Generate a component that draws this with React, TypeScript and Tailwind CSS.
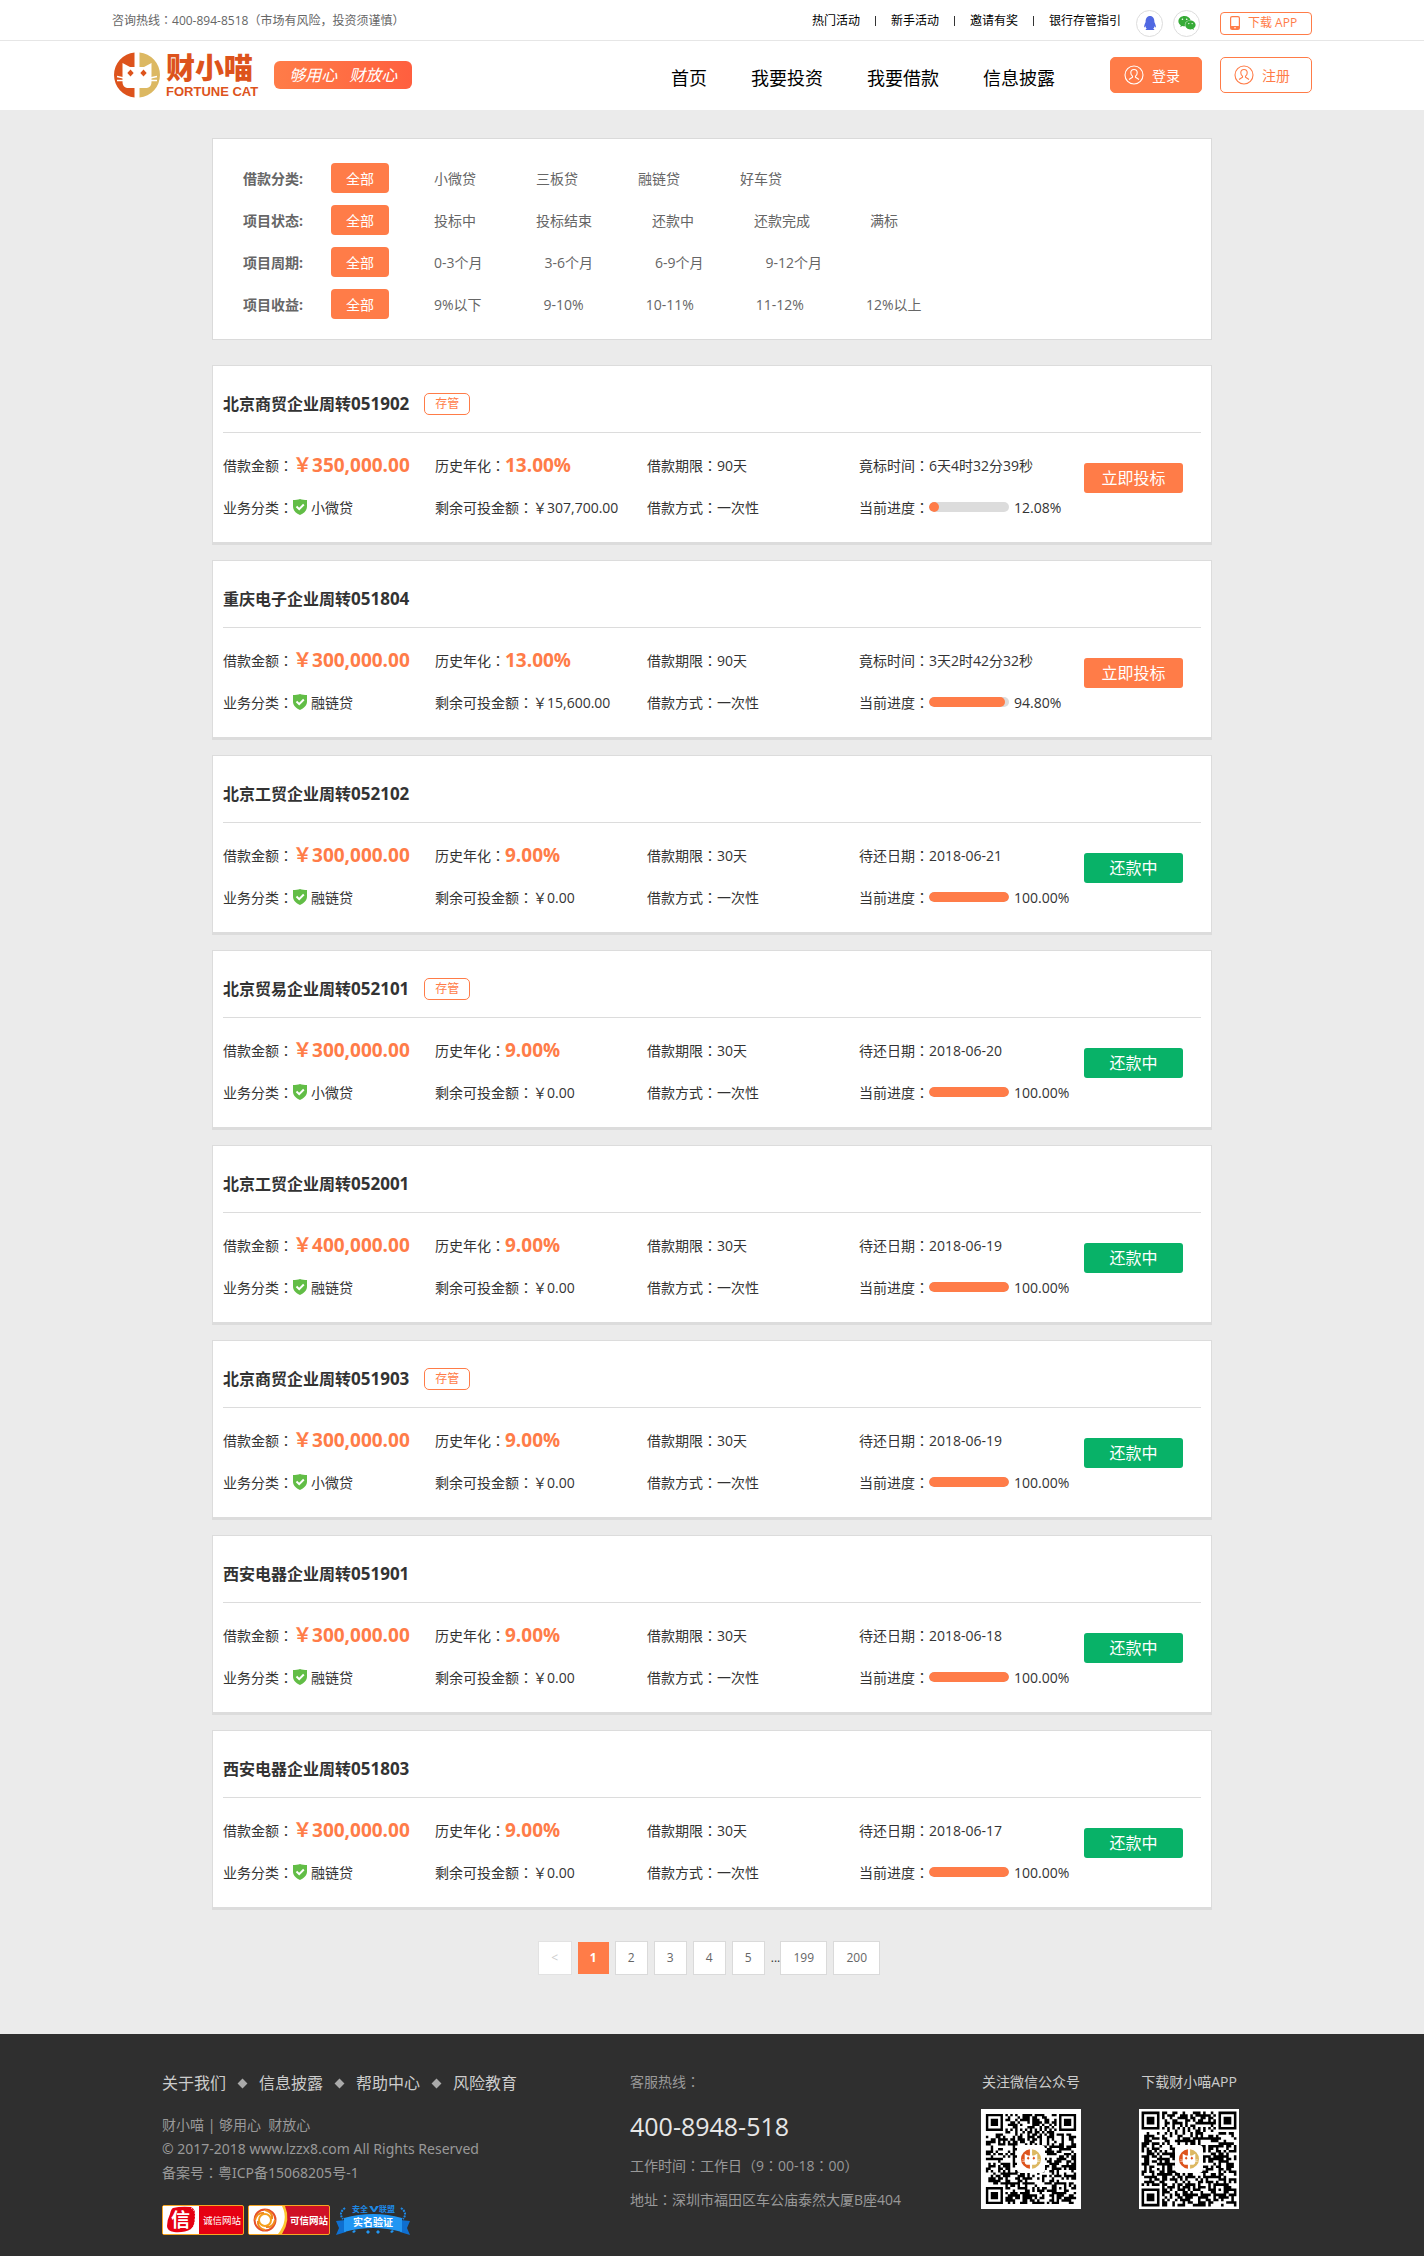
import React from "react";
import { FaQq, FaWeixin } from "react-icons/fa";

/* Full-width colon whose dots sit in the middle of its cell. */
const Colon = () => (
  <span className="font-['Open_Sans','Noto_Sans_CJK_TC',sans-serif]">：</span>
);

function CatMark({ className }: { className?: string }) {
  return (
    <svg viewBox="0 0 46 46" className={className} aria-hidden="true">
      <path d="M20.5 .5 A22.6 22.6 0 0 0 20.5 45.5 V36 H13 Q8.500 35 8.500 30 V11 L16 15 H20.500 Z" fill="#dd531c" />
      <path d="M25.500 .5 A22.6 22.6 0 0 1 25.500 45.500 V36 H33 Q37.500 35 37.500 30 V11 L30 15 H25.500 Z" fill="#dcb862" />
      <path d="M16.500 17.500l3.200 3.500-3.200 3.500-3.200-3.500zM29.500 17.500l3.200 3.500-3.200 3.500-3.200-3.500z" fill="#dd531c" />
      <path d="M3 24.500l7 1.500M3 28.500h7M43 24.500l-7 1.500M43 28.500h-7" stroke="#fff" strokeWidth="1.300" />
    </svg>
  );
}

function UserIcon() {
  return (
    <svg viewBox="0 0 20 20" className="size-5" fill="none" stroke="currentColor" strokeWidth="1.1" aria-hidden="true">
      <circle cx="10" cy="10" r="9" />
      <path d="M10 4.500c-2 0-3.200 1.400-3.200 3.300 0 1.600.7 2.700 1.700 3.300v1L5 14.500M10 4.500c2 0 3.200 1.400 3.200 3.300 0 1.600-.7 2.700-1.700 3.300v1l3.500 2.400" />
    </svg>
  );
}

function PhoneIcon() {
  return (
    <svg viewBox="0 0 10 14" className="h-3.5 w-2.5" aria-hidden="true">
      <rect x=".6" y=".6" width="8.800" height="12.800" rx="1.500" fill="none" stroke="currentColor" strokeWidth="1.200" />
      <path d="M1 10h8v3H1z" fill="currentColor" />
      <circle cx="5" cy="11.700" r=".8" fill="#fff" />
    </svg>
  );
}

function Shield() {
  return (
    <svg viewBox="0 0 14 16" className="h-4 w-3.5" aria-hidden="true">
      <path d="M7 0c2 .8 4.500 1 7 1v6.500c0 4-3 6.800-7 8.500-4-1.700-7-4.500-7-8.500V1c2.500 0 5-.2 7-1z" fill="#62bd46" />
      <path d="M3.500 7.500l2.700 2.600 4.600-4.600" fill="none" stroke="#fff" strokeWidth="2" />
    </svg>
  );
}

const topLinks = ["热门活动", "新手活动", "邀请有奖", "银行存管指引"];
const navLinks = ["首页", "我要投资", "我要借款", "信息披露"];

function Header() {
  return (
    <header className="bg-white">
      <div className="h-[41px] border-b border-[#e6e6e6]">
        <div className="mx-auto flex h-full max-w-[1200px] items-center justify-between pt-0.5 text-[12px]">
          <p className="text-[#666]">
            咨询热线<Colon />400-894-8518
            <span className="font-['Open_Sans','Noto_Sans_CJK_TC',sans-serif]">（</span>市场有风险，投资须谨慎
            <span className="font-['Open_Sans','Noto_Sans_CJK_TC',sans-serif]">）</span>
          </p>
          <div className="flex items-center">
            <ul className="flex items-center text-black">
              {topLinks.map((t, i) => (
                <li key={t} className="flex items-center">
                  {i > 0 && <span className="mx-[15px] h-2.5 w-px bg-[#333]" />}
                  <a href="#">{t}</a>
                </li>
              ))}
            </ul>
            <div className="ml-[15px] flex gap-2.5 pt-1">
              <a href="#" aria-label="QQ" className="flex size-[27px] items-center justify-center rounded-full border border-[#ddd] text-[#5068e2]">
                <FaQq className="size-3.5" />
              </a>
              <a href="#" aria-label="微信" className="flex size-[27px] items-center justify-center rounded-full border border-[#ddd] text-[#36ab36]">
                <FaWeixin className="size-[18px]" />
              </a>
            </div>
            <div className="pt-1 pl-5">
              <a href="#" className="flex h-[23px] w-[92px] items-center gap-2 rounded border border-[#ff7c48] pl-[9px] text-[#ff7c48]">
                <PhoneIcon />
                下载 APP
              </a>
            </div>
          </div>
        </div>
      </div>
      <div className="mx-auto flex h-[69px] max-w-[1200px] items-center justify-between pb-px">
        <div className="flex items-center">
          <a href="#" className="flex items-center gap-1.5 pl-0.5 text-[#dd531c]">
            <CatMark className="size-[46px]" />
            <span className="flex flex-col">
              <span className="text-[29px] leading-[33px] font-black">财小喵</span>
              <span className="font-['Liberation_Sans',sans-serif] text-[13px] leading-[15px] font-bold">FORTUNE CAT</span>
            </span>
          </a>
          <span className="ml-4 flex h-7 w-[138px] items-center justify-center gap-3 rounded-md bg-linear-to-r from-[#ff7c48] to-[#ff5f3f] text-[16px] text-white italic">
            <span>够用心</span>
            <span>财放心</span>
          </span>
        </div>
        <div className="flex items-center">
          <nav className="flex gap-11 pt-1.5 text-[18px] text-black">
            {navLinks.map((t) => (
              <a key={t} href="#">{t}</a>
            ))}
          </nav>
          <div className="ml-[55px] flex gap-[18px] text-[14px]">
            <button className="flex h-9 w-[92px] items-center gap-2 rounded-[5px] border border-[#ff7c48] bg-[#ff7c48] pl-[13px] text-white">
              <UserIcon />
              登录
            </button>
            <button className="flex h-9 w-[92px] items-center gap-2 rounded-[5px] border border-[#ff7c48] pl-[13px] text-[#ff7c48]">
              <UserIcon />
              注册
            </button>
          </div>
        </div>
      </div>
    </header>
  );
}

const filters = [
  { label: "借款分类:", gap: "gap-[60px]", options: ["小微贷", "三板贷", "融链贷", "好车贷"] },
  { label: "项目状态:", gap: "gap-[60px]", options: ["投标中", "投标结束", "还款中", "还款完成", "满标"] },
  { label: "项目周期:", gap: "gap-[62px]", options: ["0-3个月", "3-6个月", "6-9个月", "9-12个月"] },
  { label: "项目收益:", gap: "gap-[62px]", options: ["9%以下", "9-10%", "10-11%", "11-12%", "12%以上"] },
];

function Filters() {
  return (
    <section className="flex flex-col gap-3 border border-[#dadada] bg-white px-[30px] pt-6 pb-5 text-[14px] text-[#666]">
      {filters.map((f) => (
        <div key={f.label} className="flex h-[30px] items-center">
          <span className="w-[88px] font-bold">{f.label}</span>
          <button className="h-[30px] w-[58px] rounded bg-[#ff7c48] text-white">全部</button>
          <div className={`ml-[45px] flex ${f.gap}`}>
            {f.options.map((o) => (
              <button key={o}>{o}</button>
            ))}
          </div>
        </div>
      ))}
    </section>
  );
}

type Loan = {
  name: string;
  no: string;
  custody?: boolean;
  amount: string;
  rate: string;
  kind: string;
  left: string;
  term: string;
  dateLabel: string;
  date: string;
  progress: number;
};

const paid = { rate: "9.00%", left: "0.00", term: "30天", dateLabel: "待还日期", progress: 100 };

const loans: Loan[] = [
  { name: "北京商贸企业周转", no: "051902", custody: true, amount: "350,000.00", rate: "13.00%", kind: "小微贷", left: "307,700.00", term: "90天", dateLabel: "竟标时间", date: "6天4时32分39秒", progress: 12.08 },
  { name: "重庆电子企业周转", no: "051804", amount: "300,000.00", rate: "13.00%", kind: "融链贷", left: "15,600.00", term: "90天", dateLabel: "竟标时间", date: "3天2时42分32秒", progress: 94.8 },
  { ...paid, name: "北京工贸企业周转", no: "052102", amount: "300,000.00", kind: "融链贷", date: "2018-06-21" },
  { ...paid, name: "北京贸易企业周转", no: "052101", custody: true, amount: "300,000.00", kind: "小微贷", date: "2018-06-20" },
  { ...paid, name: "北京工贸企业周转", no: "052001", amount: "400,000.00", kind: "融链贷", date: "2018-06-19" },
  { ...paid, name: "北京商贸企业周转", no: "051903", custody: true, amount: "300,000.00", kind: "小微贷", date: "2018-06-19" },
  { ...paid, name: "西安电器企业周转", no: "051901", amount: "300,000.00", kind: "融链贷", date: "2018-06-18" },
  { ...paid, name: "西安电器企业周转", no: "051803", amount: "300,000.00", kind: "融链贷", date: "2018-06-17" },
];

function Field({ label, children }: { label: string; children: React.ReactNode }) {
  return (
    <div className="flex items-center whitespace-nowrap">
      <span>{label}<Colon /></span>
      {children}
    </div>
  );
}

function LoanCard({ loan }: { loan: Loan }) {
  const open = loan.progress < 100;
  return (
    <li className="border border-b-3 border-[#dcdcdc] bg-white px-2.5 pb-3.5 text-[14px] text-[#333]">
      <div className="flex h-[67px] items-center gap-[15px] border-b border-[#dcdcdc] pt-2.5">
        <h2 className="text-[16px] leading-6 font-bold">
          {loan.name}<span className="text-[17px]">{loan.no}</span>
        </h2>
        {loan.custody && (
          <span className="flex h-[22px] w-[46px] items-center justify-center rounded-[5px] border border-[#ff7c48] text-[12px] text-[#ff7c48]">存管</span>
        )}
      </div>
      <div className="grid auto-rows-[42px] grid-cols-[repeat(4,212fr)_130fr] pt-[11px]">
        <Field label="借款金额">
          <strong className="text-[19px] leading-6 text-[#ff7c48]">￥{loan.amount}</strong>
        </Field>
        <Field label="历史年化">
          <strong className="text-[19px] leading-6 text-[#ff7c48]">{loan.rate}</strong>
        </Field>
        <Field label="借款期限">{loan.term}</Field>
        <Field label={loan.dateLabel}>{loan.date}</Field>
        <div className="row-span-2 flex items-center pb-4 pl-[13px]">
          <button className={`h-[30px] w-[99px] rounded-[3px] text-[16px] text-white ${open ? "bg-[#ff7c48]" : "bg-[#08b268]"}`}>
            {open ? "立即投标" : "还款中"}
          </button>
        </div>
        <Field label="业务分类">
          <Shield />
          <span className="ml-1">{loan.kind}</span>
        </Field>
        <Field label="剩余可投金额">￥{loan.left}</Field>
        <Field label="借款方式">一次性</Field>
        <Field label="当前进度">
          <div
            role="progressbar"
            aria-label="当前进度"
            aria-valuenow={loan.progress}
            className="h-2.5 w-20 overflow-hidden rounded-full bg-[#dcdcdc]"
          >
            <div className="h-full rounded-full bg-[#ff7c48]" style={{ width: `${loan.progress}%` }} />
          </div>
          <span className="ml-[5px]">{loan.progress.toFixed(2)}%</span>
        </Field>
      </div>
    </li>
  );
}

function Pagination() {
  const page = "h-[34px] border border-[#dadada] bg-white text-[#666]";
  return (
    <nav aria-label="分页" className="mt-[31px] flex items-center justify-center gap-1.5 pr-1.5 text-[12px]">
      <button disabled className="h-[34px] w-[34px] border border-[#e2e2e2] bg-white text-[#ccc]">&lt;</button>
      <button aria-current="page" className="h-8 w-[31px] bg-[#ff7c48] font-bold text-white">1</button>
      {["2", "3", "4", "5"].map((n) => (
        <button key={n} className={`${page} w-[33px]`}>{n}</button>
      ))}
      <div className="flex items-center text-[#333]">
        ...
        <button className={`${page} w-[47px]`}>199</button>
      </div>
      <button className={`${page} w-[47px]`}>200</button>
    </nav>
  );
}

const N = 37;

function finder(x: number, y: number): boolean | null {
  for (const [fx, fy] of [[0, 0], [N - 7, 0], [0, N - 7]]) {
    const dx = x - fx;
    const dy = y - fy;
    if (dx >= -1 && dx <= 7 && dy >= -1 && dy <= 7) {
      const d = Math.max(Math.abs(dx - 3), Math.abs(dy - 3));
      return d === 3 || d <= 1;
    }
  }
  const a = Math.max(Math.abs(x - 30), Math.abs(y - 30));
  return a <= 2 ? a !== 1 : null;
}

function qrPath(seed: number): string {
  let s = seed;
  let d = "";
  for (let y = 0; y < N; y++) {
    for (let x = 0; x < N; x++) {
      s = (s * 1103515245 + 12345) % 2147483648;
      const fixed = finder(x, y);
      const on = fixed === null ? (x === 6 || y === 6 ? (x + y) % 2 === 0 : s / 2147483648 < 0.52) : fixed;
      if (on) d += `M${x} ${y}h1v1h-1z`;
    }
  }
  return d;
}

function QrCode({ label, seed, wide }: { label: string; seed: number; wide?: boolean }) {
  return (
    <figure className="flex w-[100px] flex-col items-center gap-[15px]">
      <figcaption className="text-[14px] leading-6 whitespace-nowrap text-[#ccc]">{label}</figcaption>
      <div className="relative size-[100px] bg-white">
        <svg viewBox={wide ? "-1 -1 39 39" : "-2 -2 41 41"} className="size-full" role="img" aria-label={label}>
          <path d={qrPath(seed)} fill="#000" />
        </svg>
        <span className="absolute inset-0 m-auto flex size-7 items-center justify-center rounded bg-white">
          <CatMark className="size-5" />
        </span>
      </div>
    </figure>
  );
}

function HonestBadge() {
  return (
    <svg viewBox="0 0 82 30" className="h-[30px] w-[82px]" role="img" aria-label="诚信网站">
      <rect x=".5" y=".5" width="81" height="29" rx="1.500" fill="#e60012" stroke="#f5a623" />
      <path d="M1 1h36v28H1z" fill="#fff" />
      <path d="M11 3q8-2 18-1 5 2 4 10 0 9-4 12-7 4-17 3-7-1-7-6 0-6 3-12 1-5 3-6z" fill="#e60012" />
      <path d="M29 3q5 3 4 10 0 8-4 11" fill="none" stroke="#fff" strokeWidth=".8" strokeDasharray="1.500 1.500" />
      <text x="9" y="22" fontSize="19" fontWeight="700" fill="#fff">信</text>
      <text x="41" y="19" fontSize="9.500" fill="#fff">诚信网站</text>
    </svg>
  );
}

function TrustBadge() {
  return (
    <svg viewBox="0 0 82 30" className="h-[30px] w-[82px]" role="img" aria-label="可信网站">
      <rect x=".5" y=".5" width="81" height="29" rx="1.500" fill="#cf1126" stroke="#f5a623" />
      <path d="M1 1h34q7 14-3 28H1z" fill="#fff" />
      <path d="M34 1q7 14-4 28h4q9-14 3-28z" fill="#fdc62f" />
      <g fill="none" strokeWidth="2">
        <circle cx="17" cy="15" r="10.500" stroke="#e6502a" />
        <circle cx="17" cy="15" r="6" stroke="#f5a11c" />
        <path d="M17 5q8 2 7 9M27 15q-2 8-9 7M17 25q-8-2-7-9M7 15q2-8 9-7" stroke="#f08a1d" />
      </g>
      <text x="42" y="19" fontSize="9.500" fontWeight="700" fill="#fff">可信网站</text>
    </svg>
  );
}

function VerifiedBadge() {
  return (
    <svg viewBox="0 0 74 30" className="h-[30px] w-[74px]" role="img" aria-label="安全联盟实名验证">
      <path d="M9 3q-7 5-2 11M65 3q7 5 2 11" fill="none" stroke="#1e88e5" strokeWidth="2" strokeDasharray="2 1" />
      <path d="M0 16l10-1v12l-10 3 3-7zM74 16l-10-1v12l10 3-3-7z" fill="#0f6fd0" />
      <path d="M8 13q29-8 58 0v14q-29-8-58 0z" fill="#2196f3" />
      <text x="16" y="7" fontSize="8" fontWeight="700" fill="#1e88e5">安全</text>
      <path d="M33 1h3l2 4 2-4h3l-4 6h-2z" fill="#1e88e5" />
      <text x="43" y="7" fontSize="8" fontWeight="700" fill="#1e88e5">联盟</text>
      <text x="17" y="21" fontSize="10" fontWeight="700" fill="#fff">实名验证</text>
      <path d="M18 25l2 1-2 2-2-1zM32 25l2 2-2 2-2-2zM42 25l2 2-2 2-2-2zM56 25l2 1-2 2-2-1z" fill="#2196f3" />
    </svg>
  );
}

const footerLinks = ["关于我们", "信息披露", "帮助中心", "风险教育"];

function Footer() {
  return (
    <footer className="bg-[#2f2f2f] pt-9 pb-[21px] text-[14px] text-[#999]">
      <div className="mx-auto flex max-w-[1100px] items-start justify-between pr-[23px]">
        <div className="w-[468px]">
          <ul className="flex items-center text-[16px] leading-[26px] text-[#ccc]">
            {footerLinks.map((t, i) => (
              <li key={t} className="flex items-center">
                {i > 0 && <span className="mx-[13px] size-[7px] rotate-45 bg-[#aaa]" />}
                <a href="#">{t}</a>
              </li>
            ))}
          </ul>
          <div className="pt-[17px] font-['Noto_Sans','Noto_Sans_CJK_SC',sans-serif] leading-6">
            <p>财小喵 | 够用心&nbsp; 财放心</p>
            <p>© 2017-2018 www.lzzx8.com All Rights Reserved</p>
            <p>备案号<Colon />粤ICP备15068205号-1</p>
          </div>
          <div className="mt-5 flex gap-1">
            <HonestBadge />
            <TrustBadge />
            <span className="ml-0.5"><VerifiedBadge /></span>
          </div>
        </div>
        <div className="flex-1 leading-6">
          <p>客服热线<Colon /></p>
          <p className="pt-[15px] text-[25px] leading-[34px] text-[#e6e6e6]">400-8948-518</p>
          <p className="pt-[11px]">
            工作时间<Colon />工作日
            <span className="font-['Open_Sans','Noto_Sans_CJK_TC',sans-serif]">（9：00-18：00）</span>
          </p>
          <p className="pt-2.5">地址<Colon />深圳市福田区车公庙泰然大厦B座404</p>
        </div>
        <div className="flex gap-[58px]">
          <QrCode label="关注微信公众号" seed={20187} />
          <QrCode label="下载财小喵APP" seed={91543} wide />
        </div>
      </div>
    </footer>
  );
}

export default function App() {
  return (
    <div className="bg-[#ebebeb] font-['Open_Sans','Noto_Sans_CJK_SC',sans-serif]">
      <Header />
      <main className="mx-auto max-w-[1000px] pt-7 pb-[59px]">
        <Filters />
        <ul className="mt-[25px] flex flex-col gap-[15px]">
          {loans.map((l) => (
            <LoanCard key={l.no} loan={l} />
          ))}
        </ul>
        <Pagination />
      </main>
      <Footer />
    </div>
  );
}
